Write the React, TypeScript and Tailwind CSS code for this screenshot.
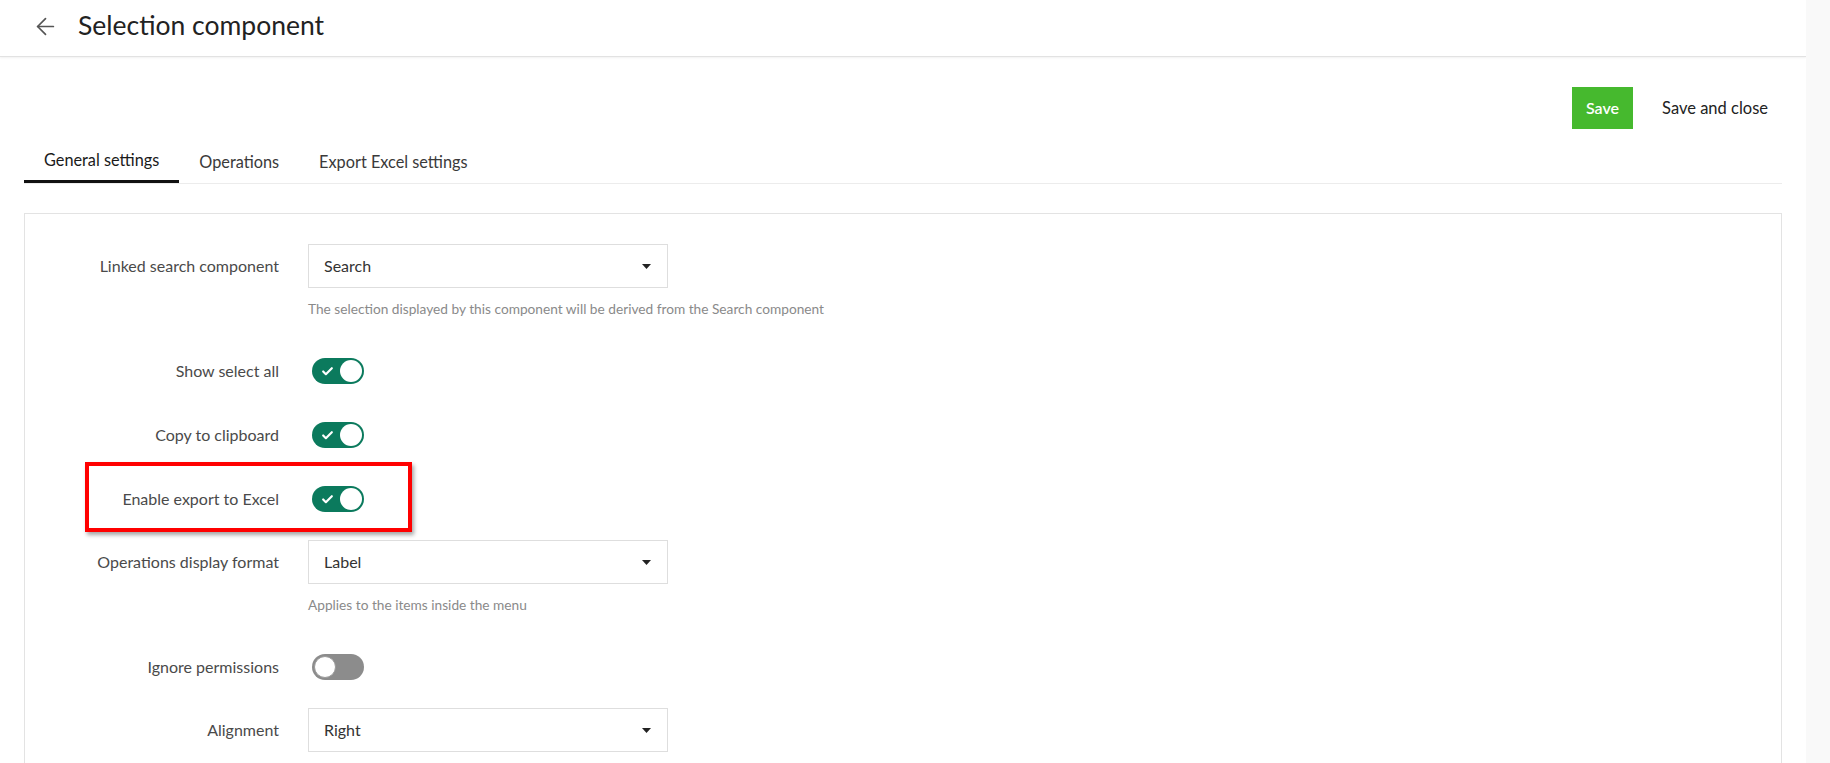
import { ArrowLeft, Check } from 'lucide-react'

const font = { fontFamily: 'Lato, "Liberation Sans", sans-serif' }

function Toggle({ on }: { on: boolean }) {
  if (on) {
    return (
      <div className="flex h-[26px] w-[52px] items-center justify-between rounded-full bg-[#0b7a5d] pl-[9px] pr-[2px]">
        <Check className="h-[13px] w-[13px] text-white" strokeWidth={4} />
        <span className="h-[22px] w-[22px] rounded-full bg-white" />
      </div>
    )
  }
  return (
    <div className="flex h-[26px] w-[52px] items-center rounded-full bg-[#8c8c8c] pl-[2px]">
      <span className="h-[22px] w-[22px] rounded-full border border-[#9a9a9a] bg-white" />
    </div>
  )
}

function Select({ value }: { value: string }) {
  return (
    <div className="flex h-[44px] w-[360px] items-center justify-between border border-[#dedede] bg-white pl-[15px] pr-[16px] text-[16px] text-[#333]">
      <span>{value}</span>
      <svg width="9" height="5" viewBox="0 0 9 5">
        <path d="M0 0h9L4.5 5z" fill="#222" />
      </svg>
    </div>
  )
}

function SelectRow({ label, value, help, last }: { label: string; value: string; help?: string; last?: boolean }) {
  return (
    <div className={last ? 'pt-[9px]' : 'pb-[22px] pt-[9px]'}>
      <div className="flex items-center gap-[29px]">
        <div className="w-[254px] text-right text-[16px] text-[#4a4a4a]">{label}</div>
        <Select value={value} />
      </div>
      {help && (
        <div className="ml-[283px] mt-[13px] h-4 text-[13.7px] leading-4 text-[#8a8a8a]">{help}</div>
      )}
    </div>
  )
}

function ToggleRow({ label, on, marked }: { label: string; on: boolean; marked?: boolean }) {
  return (
    <div className="relative flex h-[64px] items-center gap-[33px]">
      <div className="w-[254px] text-right text-[16px] text-[#4a4a4a]">{label}</div>
      <Toggle on={on} />
      {marked && (
        <div className="pointer-events-none absolute left-[60px] top-[-5px] h-[70px] w-[327px] border-[4px] border-[#ff0000] shadow-[2px_3px_4px_rgba(0,0,0,0.35)]" />
      )}
    </div>
  )
}

export default function App() {
  return (
    <div className="flex h-[763px] w-full overflow-hidden bg-white" style={font}>
      <div className="flex-1">
        <header className="flex h-[57px] items-center border-b border-[#e2e2e2] pb-[4px] shadow-[0_1px_2px_rgba(0,0,0,0.06)]">
          <ArrowLeft className="ml-[32px] h-[27px] w-[27px] text-[#555]" strokeWidth={1.5} />
          <h1 className="ml-[19px] text-[26.5px] text-[#222]">Selection component</h1>
        </header>

        <div className="px-6">
          <div className="mt-[30px] flex items-center justify-end pr-[14px]">
            <button className="h-[42px] w-[61px] bg-[#46b92e] text-[16px] font-semibold text-white">Save</button>
            <button className="ml-[29px] text-[16.5px] text-[#222]">Save and close</button>
          </div>

          <div className="mt-[12px] flex border-b border-[#ececec]">
            <div className="-mb-px flex h-[42px] items-center border-b-[3px] border-[#111] px-[20px] text-[16.3px] text-[#1a1a1a]">
              General settings
            </div>
            <div className="flex h-[42px] items-center px-[20px] text-[16.3px] text-[#3a3a3a]">Operations</div>
            <div className="flex h-[42px] items-center px-[20px] text-[16.3px] text-[#3a3a3a]">Export Excel settings</div>
          </div>

          <div className="mt-[29px] border border-[#e3e3e3] pb-[40px] pt-[21px]">
            <SelectRow
              label="Linked search component"
              value="Search"
              help="The selection displayed by this component will be derived from the Search component"
            />
            <ToggleRow label="Show select all" on />
            <ToggleRow label="Copy to clipboard" on />
            <ToggleRow label="Enable export to Excel" on marked />
            <SelectRow label="Operations display format" value="Label" help="Applies to the items inside the menu" />
            <ToggleRow label="Ignore permissions" on={false} />
            <SelectRow label="Alignment" value="Right" last />
          </div>
        </div>
      </div>
      <div className="w-[24px] bg-[#f9f9f9]" />
    </div>
  )
}
